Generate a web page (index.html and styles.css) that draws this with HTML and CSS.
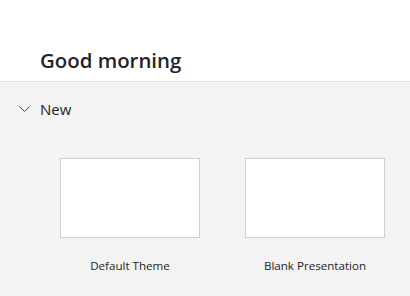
FILE: index.html
```html
<!DOCTYPE html>
<html>
<head>
<meta charset="utf-8">
<link rel="stylesheet" href="styles.css">
</head>
<body>
<header class="top">
  <h1 class="greeting">Good morning</h1>
</header>
<main class="content">
  <div class="section-head">
    <svg class="chevron" width="11" height="6" viewBox="0 0 11 6"><path d="M0.5 0.5 L5.5 5.5 L10.5 0.5" fill="none" stroke="#424242" stroke-width="1"/></svg>
    <span class="section-title">New</span>
  </div>
  <div class="cards">
    <div class="card">
      <div class="thumb"></div>
      <div class="label">Default Theme</div>
    </div>
    <div class="card">
      <div class="thumb"></div>
      <div class="label">Blank Presentation</div>
    </div>
  </div>
</main>
</body>
</html>
```
FILE: styles.css
```css
html, body {
  margin: 0;
  padding: 0;
  height: 100%;
}
body {
  font-family: "Open Sans", "Noto Sans", sans-serif;
  color: #242424;
  background: #f3f3f3;
  overflow: hidden;
}
.top {
  background: #ffffff;
  border-bottom: 1px solid #e1e1e1;
  box-sizing: border-box;
  height: 82px;
  padding: 45px 0 0 40px;
}
.greeting {
  margin: 0;
  font-size: 20.4px;
  font-weight: 600;
  line-height: 30px;
}
.section-head {
  display: flex;
  align-items: center;
  height: 54px;
  padding-left: 19px;
}
.chevron {
  display: block;
  margin-right: 10px;
}
.section-title {
  font-size: 15px;
  font-weight: 400;
  line-height: 20px;
}
.cards {
  display: flex;
  gap: 45px;
  padding: 22px 0 0 60px;
}
.card {
  width: 140px;
  display: flex;
  flex-direction: column;
  align-items: center;
}
.thumb {
  width: 140px;
  height: 80px;
  box-sizing: border-box;
  background: #ffffff;
  border: 1px solid #cfcfcf;
}
.label {
  margin-top: 20px;
  font-size: 11.6px;
  line-height: 16px;
  white-space: nowrap;
}
```
